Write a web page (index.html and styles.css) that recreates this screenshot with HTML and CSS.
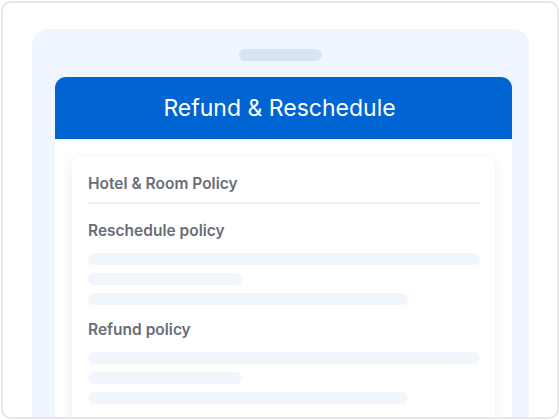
FILE: index.html
```html
<!DOCTYPE html>
<html>
<head>
<meta charset="utf-8">
<link rel="stylesheet" href="styles.css">
</head>
<body>
<div class="frame">
  <div class="phone">
    <div class="notch"></div>
    <div class="sheet">
      <div class="sheet-header"><h1 class="title">Refund &amp; Reschedule</h1></div>
      <div class="card">
        <h2 class="card-title">Hotel &amp; Room Policy</h2>
        <div class="divider"></div>
        <div class="section">
          <h3 class="section-title">Reschedule policy</h3>
          <div class="bars">
            <div class="bar bar-full"></div>
            <div class="bar bar-short"></div>
            <div class="bar bar-mid"></div>
          </div>
        </div>
        <div class="section">
          <h3 class="section-title">Refund policy</h3>
          <div class="bars">
            <div class="bar bar-full"></div>
            <div class="bar bar-short"></div>
            <div class="bar bar-mid"></div>
          </div>
        </div>
      </div>
    </div>
  </div>
</div>
</body>
</html>
```

FILE: styles.css
```css
* { box-sizing: border-box; }
html, body {
  margin: 0;
  padding: 0;
  width: 560px;
  height: 420px;
  overflow: hidden;
  background: #ffffff;
  font-family: Inter, "Noto Sans", sans-serif;
}
.frame {
  margin: 1px;
  width: 558px;
  height: 418px;
  border: 2px solid #e4e7f1;
  border-radius: 10px;
  padding: 26px 28px 0 29px;
  overflow: hidden;
  background: #ffffff;
}
.phone {
  height: 100%;
  background: #f0f6ff;
  border-radius: 16px 16px 0 0;
  padding: 20px 17px 0 23px;
  display: flex;
  flex-direction: column;
}
.notch {
  align-self: center;
  width: 83px;
  height: 12px;
  border-radius: 6px;
  background: #d8e3f3;
  margin: 0 0 16px -6px;
}
.sheet {
  flex: 1;
  background: #ffffff;
  border-radius: 11px 11px 0 0;
  overflow: hidden;
}
.sheet-header {
  height: 62px;
  background: #0064d3;
  display: flex;
  align-items: center;
  justify-content: center;
  padding-right: 8px;
}
.title {
  margin: 0;
  color: #ffffff;
  font-size: 23px;
  font-weight: 400;
  line-height: 28px;
}
.card {
  margin: 18px 17px 0 17px;
  background: #ffffff;
  border-radius: 9px;
  box-shadow: 0 3px 14px rgba(30, 40, 60, 0.09);
  padding: 17px 15px 60px 16px;
}
.card-title, .section-title {
  margin: 0;
  font-size: 15.5px;
  line-height: 20px;
  font-weight: 600;
  color: #6a6d78;
}
.divider {
  height: 2px;
  background: #eef0f4;
  margin: 8px 0 17px 0;
}
.section + .section { margin-top: 15px; }
.bars {
  margin-top: 12px;
  display: flex;
  flex-direction: column;
  gap: 8px;
}
.bar {
  height: 12px;
  border-radius: 6px;
  background: #f1f6fd;
}
.bar-full { width: 100%; }
.bar-short { width: 154px; }
.bar-mid { width: 320px; }
```
